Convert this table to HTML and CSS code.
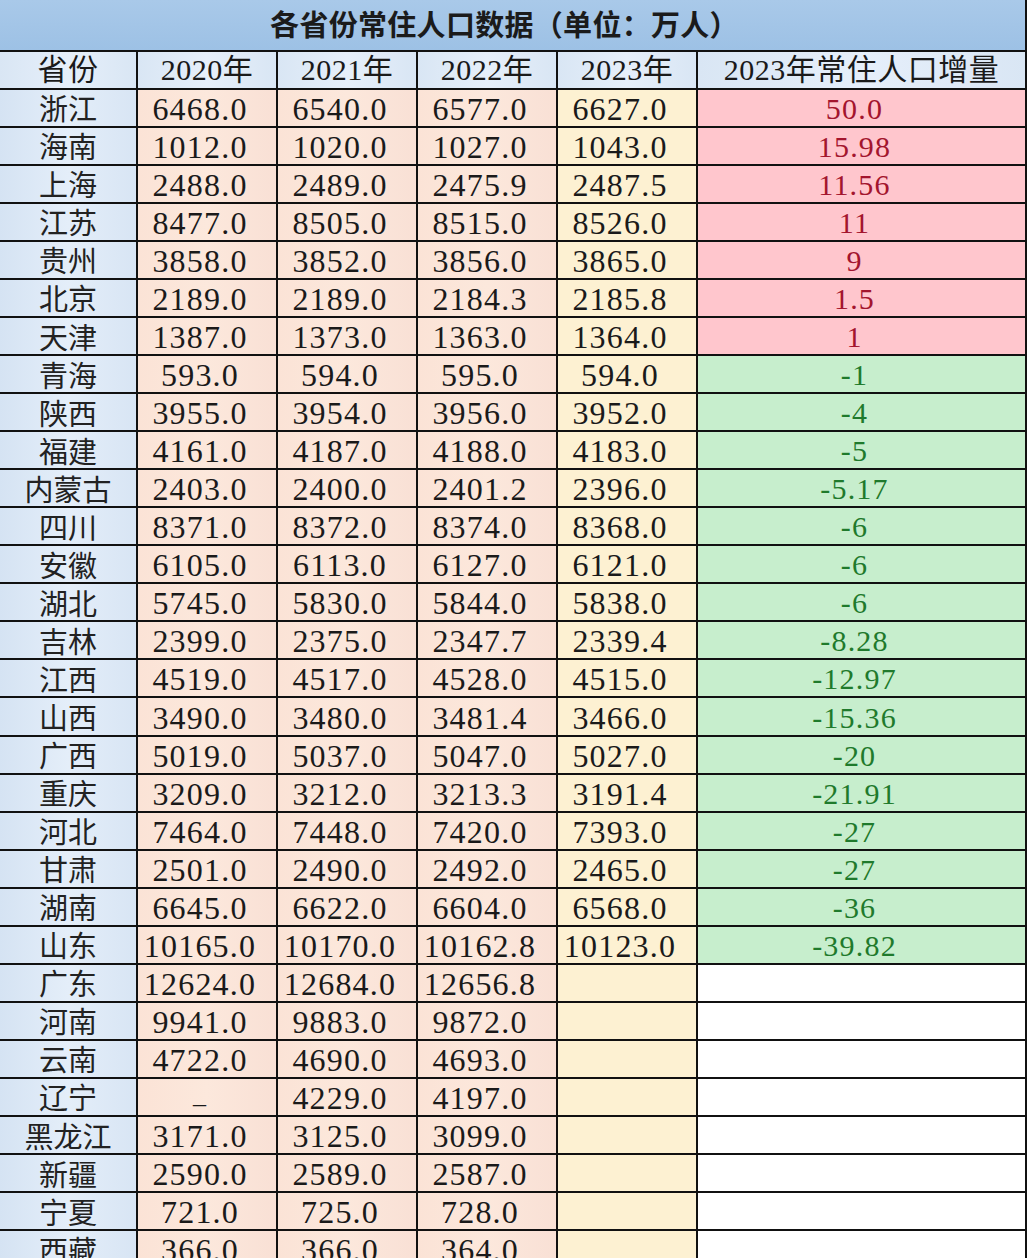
FILE: index.html
```html
<!DOCTYPE html>
<html lang="zh-CN">
<head>
<meta charset="utf-8">
<title>各省份常住人口数据</title>
<link rel="stylesheet" href="styles.css">
</head>
<body>
<div class="sheet">
  <div class="title">各省份常住人口数据（单位：万人）</div>

  <div class="hd">省份</div><div class="hd">2020年</div><div class="hd">2021年</div><div class="hd">2022年</div><div class="hd">2023年</div><div class="hd">2023年常住人口增量</div>

  <div class="prov">浙江</div><div class="num p">6468.0</div><div class="num p">6540.0</div><div class="num p">6577.0</div><div class="num y">6627.0</div><div class="num up">50.0</div>
  <div class="prov">海南</div><div class="num p">1012.0</div><div class="num p">1020.0</div><div class="num p">1027.0</div><div class="num y">1043.0</div><div class="num up">15.98</div>
  <div class="prov">上海</div><div class="num p">2488.0</div><div class="num p">2489.0</div><div class="num p">2475.9</div><div class="num y">2487.5</div><div class="num up">11.56</div>
  <div class="prov">江苏</div><div class="num p">8477.0</div><div class="num p">8505.0</div><div class="num p">8515.0</div><div class="num y">8526.0</div><div class="num up">11</div>
  <div class="prov">贵州</div><div class="num p">3858.0</div><div class="num p">3852.0</div><div class="num p">3856.0</div><div class="num y">3865.0</div><div class="num up">9</div>
  <div class="prov">北京</div><div class="num p">2189.0</div><div class="num p">2189.0</div><div class="num p">2184.3</div><div class="num y">2185.8</div><div class="num up">1.5</div>
  <div class="prov">天津</div><div class="num p">1387.0</div><div class="num p">1373.0</div><div class="num p">1363.0</div><div class="num y">1364.0</div><div class="num up">1</div>
  <div class="prov">青海</div><div class="num p">593.0</div><div class="num p">594.0</div><div class="num p">595.0</div><div class="num y">594.0</div><div class="num down">-1</div>
  <div class="prov">陕西</div><div class="num p">3955.0</div><div class="num p">3954.0</div><div class="num p">3956.0</div><div class="num y">3952.0</div><div class="num down">-4</div>
  <div class="prov">福建</div><div class="num p">4161.0</div><div class="num p">4187.0</div><div class="num p">4188.0</div><div class="num y">4183.0</div><div class="num down">-5</div>
  <div class="prov">内蒙古</div><div class="num p">2403.0</div><div class="num p">2400.0</div><div class="num p">2401.2</div><div class="num y">2396.0</div><div class="num down">-5.17</div>
  <div class="prov">四川</div><div class="num p">8371.0</div><div class="num p">8372.0</div><div class="num p">8374.0</div><div class="num y">8368.0</div><div class="num down">-6</div>
  <div class="prov">安徽</div><div class="num p">6105.0</div><div class="num p">6113.0</div><div class="num p">6127.0</div><div class="num y">6121.0</div><div class="num down">-6</div>
  <div class="prov">湖北</div><div class="num p">5745.0</div><div class="num p">5830.0</div><div class="num p">5844.0</div><div class="num y">5838.0</div><div class="num down">-6</div>
  <div class="prov">吉林</div><div class="num p">2399.0</div><div class="num p">2375.0</div><div class="num p">2347.7</div><div class="num y">2339.4</div><div class="num down">-8.28</div>
  <div class="prov">江西</div><div class="num p">4519.0</div><div class="num p">4517.0</div><div class="num p">4528.0</div><div class="num y">4515.0</div><div class="num down">-12.97</div>
  <div class="prov">山西</div><div class="num p">3490.0</div><div class="num p">3480.0</div><div class="num p">3481.4</div><div class="num y">3466.0</div><div class="num down">-15.36</div>
  <div class="prov">广西</div><div class="num p">5019.0</div><div class="num p">5037.0</div><div class="num p">5047.0</div><div class="num y">5027.0</div><div class="num down">-20</div>
  <div class="prov">重庆</div><div class="num p">3209.0</div><div class="num p">3212.0</div><div class="num p">3213.3</div><div class="num y">3191.4</div><div class="num down">-21.91</div>
  <div class="prov">河北</div><div class="num p">7464.0</div><div class="num p">7448.0</div><div class="num p">7420.0</div><div class="num y">7393.0</div><div class="num down">-27</div>
  <div class="prov">甘肃</div><div class="num p">2501.0</div><div class="num p">2490.0</div><div class="num p">2492.0</div><div class="num y">2465.0</div><div class="num down">-27</div>
  <div class="prov">湖南</div><div class="num p">6645.0</div><div class="num p">6622.0</div><div class="num p">6604.0</div><div class="num y">6568.0</div><div class="num down">-36</div>
  <div class="prov">山东</div><div class="num p">10165.0</div><div class="num p">10170.0</div><div class="num p">10162.8</div><div class="num y">10123.0</div><div class="num down">-39.82</div>
  <div class="prov">广东</div><div class="num p">12624.0</div><div class="num p">12684.0</div><div class="num p">12656.8</div><div class="num y"></div><div class="num blank"></div>
  <div class="prov">河南</div><div class="num p">9941.0</div><div class="num p">9883.0</div><div class="num p">9872.0</div><div class="num y"></div><div class="num blank"></div>
  <div class="prov">云南</div><div class="num p">4722.0</div><div class="num p">4690.0</div><div class="num p">4693.0</div><div class="num y"></div><div class="num blank"></div>
  <div class="prov">辽宁</div><div class="num p dash">_</div><div class="num p">4229.0</div><div class="num p">4197.0</div><div class="num y"></div><div class="num blank"></div>
  <div class="prov">黑龙江</div><div class="num p">3171.0</div><div class="num p">3125.0</div><div class="num p">3099.0</div><div class="num y"></div><div class="num blank"></div>
  <div class="prov">新疆</div><div class="num p">2590.0</div><div class="num p">2589.0</div><div class="num p">2587.0</div><div class="num y"></div><div class="num blank"></div>
  <div class="prov">宁夏</div><div class="num p">721.0</div><div class="num p">725.0</div><div class="num p">728.0</div><div class="num y"></div><div class="num blank"></div>
  <div class="prov">西藏</div><div class="num p">366.0</div><div class="num p">366.0</div><div class="num p">364.0</div><div class="num y"></div><div class="num blank"></div>
</div>
</body>
</html>
```

FILE: styles.css
```css
html, body {
  margin: 0;
  padding: 0;
  background: #ffffff;
}

body {
  width: 1028px;
  height: 1258px;
  overflow: hidden;
}

.sheet {
  display: grid;
  grid-template-columns: 136px 138px 138px 138px 138px 327px;
  grid-template-rows: 49.7px;
  grid-auto-rows: 36.05px;
  column-gap: 2px;
  row-gap: 2px;
  width: 1025px;
  padding-right: 2px;
  background: #111111;
  font-family: "Liberation Serif", "Noto Sans CJK SC", serif;
  color: #1a1a1a;
}

.sheet > div {
  display: flex;
  align-items: center;
  justify-content: center;
  white-space: nowrap;
  line-height: 1;
}

.title {
  grid-column: 1 / -1;
  background: linear-gradient(180deg, #a9c9e9 0%, #9dc1e5 100%);
  font-family: "Noto Sans CJK SC", sans-serif;
  font-weight: 700;
  font-size: 29px;
  letter-spacing: 0.3px;
  color: #1b1b1b;
  padding-right: 16px;
  padding-bottom: 2px;
  box-sizing: border-box;
}

.hd {
  background: linear-gradient(90deg, #d9e6f4 0%, #e6effa 50%, #d9e6f4 100%);
  font-size: 30px;
  letter-spacing: 0.5px;
}

.prov {
  background: linear-gradient(90deg, #d5e3f3 0%, #e4eef9 50%, #d8e5f4 100%);
  font-family: "Noto Sans CJK SC", sans-serif;
  font-size: 29px;
  color: #222222;
}

.num {
  font-size: 32px;
  letter-spacing: 1.2px;
  padding-right: 14px;
  padding-top: 2px;
  box-sizing: border-box;
}

.p {
  background: linear-gradient(90deg, #fbe3d6 0%, #fce8dc 50%, #f9e0d5 100%);
}

.y {
  background: #fdf1d2;
}

.up {
  background: #ffc6cd;
  color: #a3152e;
  font-size: 30px;
}

.down {
  background: #c7eecd;
  color: #1f7a2c;
  font-size: 30px;
}

.blank {
  background: #ffffff;
}

.dash {
  align-items: flex-end;
  font-size: 26px;
  padding-bottom: 6px;
}
```
